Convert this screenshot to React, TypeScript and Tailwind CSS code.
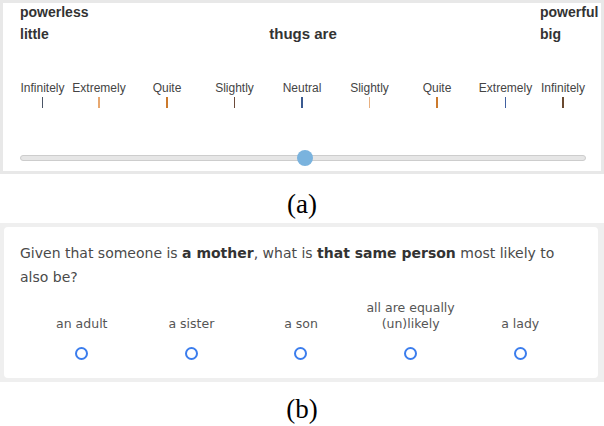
import React from "react";

const scale = [
  { label: "Infinitely", w: "w-[45px]", tick: "bg-[#4a5566]" },
  { label: "Extremely", w: "w-[68px]", tick: "bg-[#e8a870]" },
  { label: "Quite", w: "w-[68px]", tick: "bg-[#cc7a2c]" },
  { label: "Slightly", w: "w-[67px]", tick: "bg-[#6b4a3a]" },
  { label: "Neutral", w: "w-[68px]", tick: "bg-[#3a5a90]" },
  { label: "Slightly", w: "w-[67px]", tick: "bg-[#e8b080]" },
  { label: "Quite", w: "w-[68px]", tick: "bg-[#cc7a2c]" },
  { label: "Extremely", w: "w-[69px]", tick: "bg-[#4060a0]" },
  { label: "Infinitely", w: "w-[46px]", tick: "bg-[#6a4a30]" },
];

const options = ["an adult", "a sister", "a son", "all are equally (un)likely", "a lady"];

const App: React.FC = () => {
  return (
    <div className="w-[604px] h-[426px] bg-white overflow-hidden">
      {/* (a) slider question */}
      <div className="border-[3px] border-[#e8e8e8]">
        <div className="bg-white pl-[17px] pr-[15px] pb-[10px] font-['Liberation_Sans',Arial,sans-serif] text-[#333]">
          <div className="grid grid-cols-[1fr_auto_1fr] text-[14px] font-bold leading-[18px]">
            <div className="flex flex-col gap-[4px]">
              <span>powerless</span>
              <span>little</span>
            </div>
            <div className="flex flex-col gap-[4px]">
              <span>&nbsp;</span>
              <span className="text-[15px]">thugs are</span>
            </div>
            <div className="flex justify-end">
              <div className="w-[46px] flex flex-col gap-[4px] whitespace-nowrap">
                <span>powerful</span>
                <span>big</span>
              </div>
            </div>
          </div>

          <div className="flex mt-[38px]">
            {scale.map((s, i) => (
              <div key={i} className={`${s.w} flex flex-col items-center`}>
                <span className="text-[12px] leading-[14px] text-[#444] whitespace-nowrap">
                  {s.label}
                </span>
                <span className={`mt-[2px] w-[1.5px] h-[11px] ${s.tick}`} />
              </div>
            ))}
          </div>

          <div className="relative mt-[47px] h-[6px] rounded-full bg-[#e6e6e6] border border-[#cdcdcd]">
            <div className="absolute left-[276px] top-[-6px] w-[16px] h-[16px] rounded-full bg-[#7ab3de]" />
          </div>
        </div>
      </div>

      <div className="mt-[15px] mb-[4px] text-center font-['Liberation_Serif','Times_New_Roman',serif] text-[27px] leading-[30px] text-black">
        (a)
      </div>

      {/* (b) multiple choice question */}
      <div className="bg-[#efefef] pt-[4px] pb-[4px] pl-[4px] pr-[6px]">
        <div className="bg-white rounded-[4px] pt-[14px] pb-[18px] font-['DejaVu_Sans',Verdana,sans-serif]">
          <p className="pl-[16px] pr-[20px] text-[14px] leading-[24px] text-[#4a4a4a]">
            Given that someone is <b className="text-[#333]">a mother</b>, what is{" "}
            <b className="text-[#333]">that same person</b> most likely to also be?
          </p>
          <div className="mx-[23px] mt-[11px] grid grid-cols-5">
            {options.map((o) => (
              <div key={o} className="flex flex-col items-center">
                <div className="h-[32px] flex items-end justify-center text-center text-[12.5px] leading-[16px] text-[#555] px-[6px]">
                  {o}
                </div>
                <div className="mt-[15px] w-[13px] h-[13px] rounded-full border-2 border-[#3b7ded]" />
              </div>
            ))}
          </div>
        </div>
      </div>

      <div className="mt-[12px] text-center font-['Liberation_Serif','Times_New_Roman',serif] text-[27px] leading-[30px] text-black">
        (b)
      </div>
    </div>
  );
};

export default App;
